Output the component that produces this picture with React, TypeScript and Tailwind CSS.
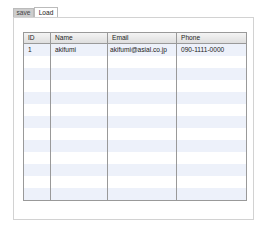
import React from "react";

const rows = Array.from({ length: 13 }, (_, i) => i);

export default function App() {
  return (
    <div className="w-[277px] h-[240px] bg-white" style={{ fontFamily: '"Liberation Sans", Arial, sans-serif' }}>
      <div className="pl-[13px] pt-[7px]">
        <div className="flex items-end h-[10px]">
          <div className="h-[9px] w-[21px] bg-[#cdcdcd] border border-b-0 border-[#bbbbbb] text-[6.6px] leading-[8px] text-[#444] flex items-center justify-center">
            save
          </div>
          <div className="h-[10px] w-[24px] bg-white border border-b-0 border-[#bbbbbb] text-[6.6px] leading-[9px] text-[#222] flex items-center justify-center">
            Load
          </div>
        </div>
        <div className="w-[241px] h-[203px] border border-[#d2d2d2] pl-[9px] pt-[14px]">
          <table className="border-collapse border border-[#999] text-[6.6px] text-[#222]" style={{ width: 224 }}>
            <colgroup>
              <col style={{ width: 27 }} />
              <col style={{ width: 57 }} />
              <col style={{ width: 69 }} />
              <col style={{ width: 70 }} />
            </colgroup>
            <thead>
              <tr className="h-[11px] bg-gradient-to-b from-[#f4f4f4] to-[#dcdcdc]">
                <th className="border border-[#999] font-normal text-left pl-[4px] p-0 leading-[10px]">ID</th>
                <th className="border border-[#999] font-normal text-left pl-[4px] p-0 leading-[10px]">Name</th>
                <th className="border border-[#999] font-normal text-left pl-[4px] p-0 leading-[10px]">Email</th>
                <th className="border border-[#999] font-normal text-left pl-[4px] p-0 leading-[10px]">Phone</th>
              </tr>
            </thead>
            <tbody>
              {rows.map((i) => (
                <tr key={i} className={`h-[12px] ${i % 2 === 0 ? "bg-[#edf1fa]" : "bg-white"}`}>
                  <td className="border-x border-[#999] pl-[4px] p-0 leading-[12px]">{i === 0 ? "1" : ""}</td>
                  <td className="border-x border-[#999] pl-[4px] p-0 leading-[12px]">{i === 0 ? "akifumi" : ""}</td>
                  <td className="border-x border-[#999] pl-[2px] p-0 leading-[12px]">{i === 0 ? "akifumi@asial.co.jp" : ""}</td>
                  <td className="border-x border-[#999] pl-[4px] p-0 leading-[12px]">{i === 0 ? "090-1111-0000" : ""}</td>
                </tr>
              ))}
            </tbody>
          </table>
        </div>
      </div>
    </div>
  );
}
